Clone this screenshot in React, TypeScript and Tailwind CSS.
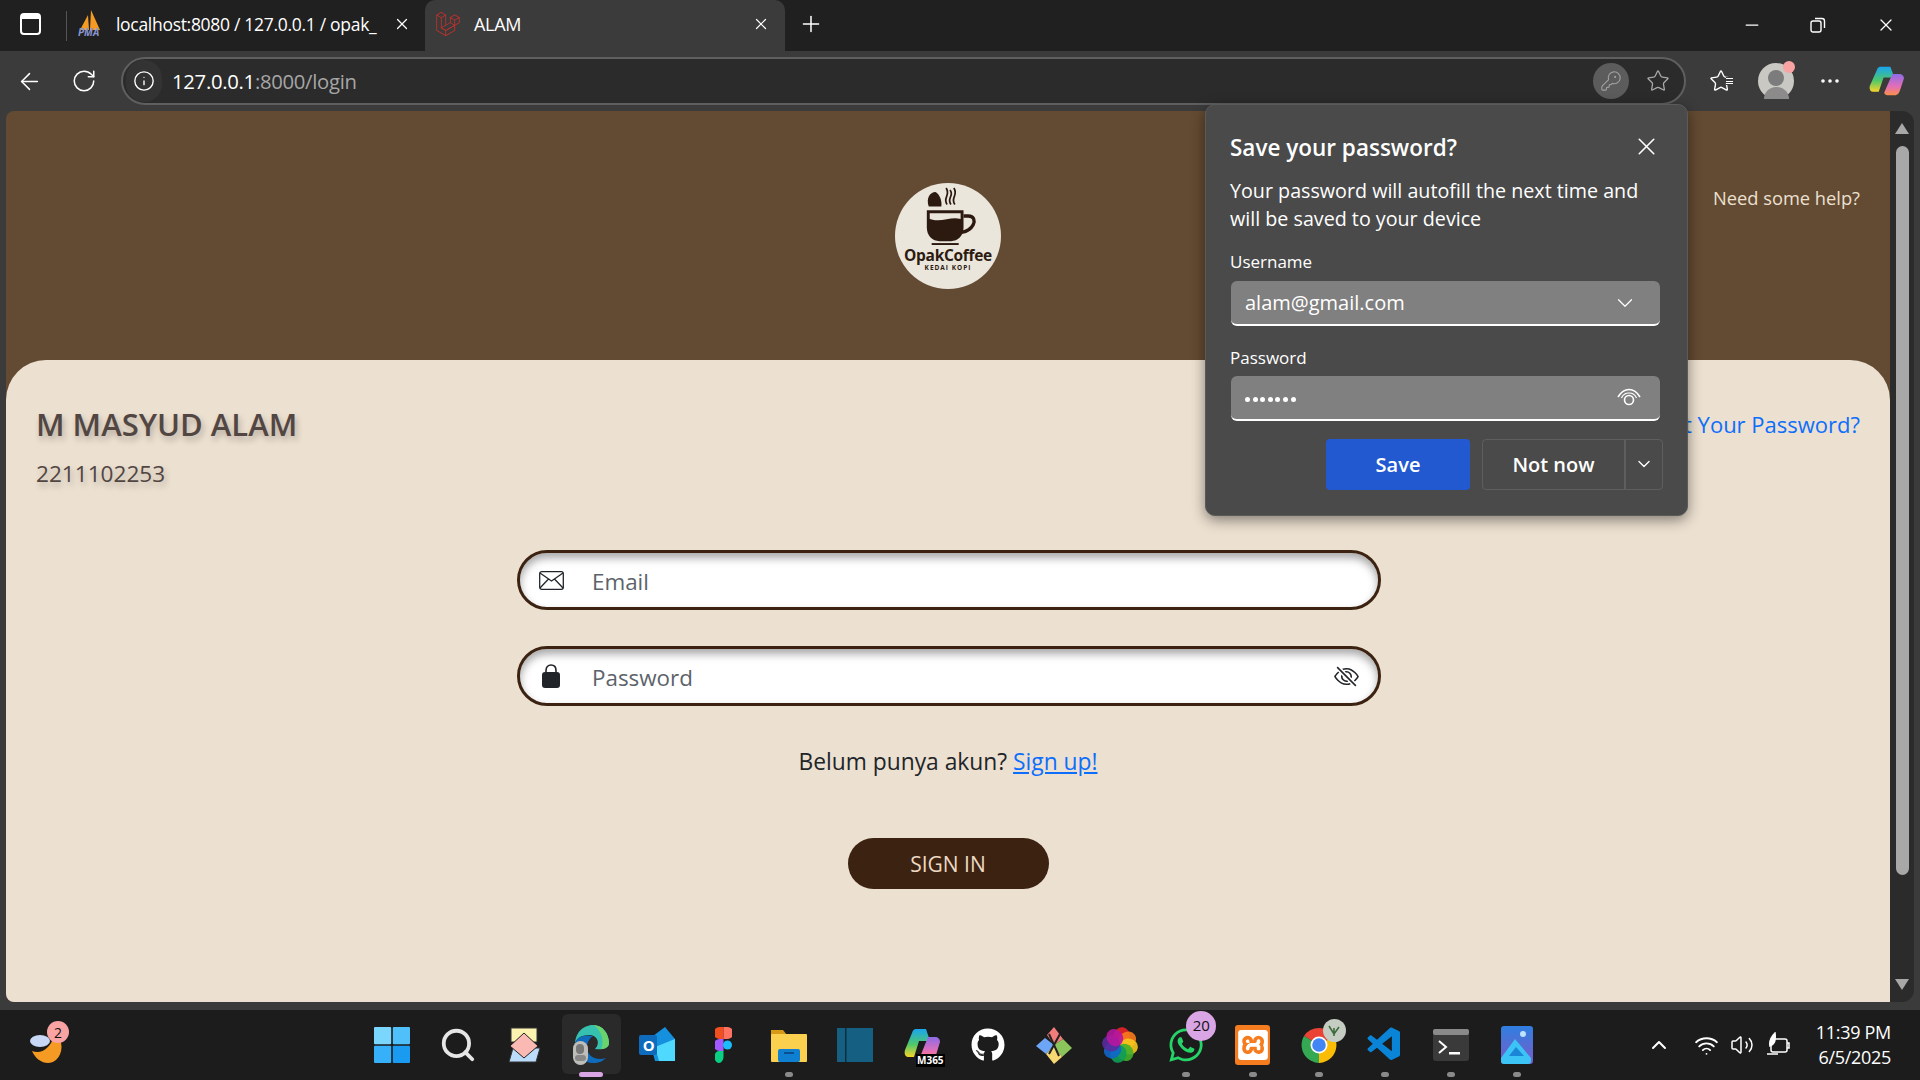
import React from "react"
import {
  ArrowLeft,
  ChevronDown,
  ChevronUp,
  Ellipsis,
  Info,
  KeyRound,
  Minus,
  Plus,
  RotateCw,
  Search,
  Star,
  Volume2,
  Wifi,
  X,
} from "lucide-react"
import { BsEyeSlash } from "react-icons/bs"
import { FaGithub, FaWhatsapp } from "react-icons/fa"
import { SiLaravel, SiXampp } from "react-icons/si"
import { VscVscode } from "react-icons/vsc"

const ui = "font-['Open_Sans','Noto_Sans',sans-serif]"

function WindowsLogo() {
  return (
    <svg width="36" height="36" viewBox="0 0 36 36">
      <rect x="0" y="0" width="17.2" height="17.2" rx="1" fill="#7ad6fc" />
      <rect x="18.8" y="0" width="17.2" height="17.2" rx="1" fill="#50c0fa" />
      <rect x="0" y="18.8" width="17.2" height="17.2" rx="1" fill="#36b0f8" />
      <rect x="18.8" y="18.8" width="17.2" height="17.2" rx="1" fill="#1a9bf2" />
    </svg>
  )
}

function WidgetsIcon() {
  return (
    <svg width="36" height="36" viewBox="0 0 36 36">
      <rect x="5" y="1" width="26" height="14" fill="#fdf3b0" stroke="#333" />
      <path d="M3 35 L7 21 H34 L30 35 Z" fill="#bcdcfb" stroke="#333" />
      <path d="M18 6 L32 19 L18 31 L4 19 Z" fill="#fbb9b3" stroke="#222" />
    </svg>
  )
}

function EdgeIcon() {
  return (
    <div className="relative w-9 h-10">
      <svg width="36" height="38" viewBox="0 0 36 38">
        <path d="M2 20 C2 6 12 0 20 0 C30 0 36 9 36 18 C36 24 28 25 22 24 C28 18 24 10 16 10 C8 10 2 14 2 20 Z" fill="#36c0b0" />
        <path d="M20 0 C30 0 36 9 36 18 C36 22 32 24 28 24 C32 16 28 4 20 0 Z" fill="#6ad36b" />
        <path d="M2 20 C2 30 10 38 20 38 C26 38 30 36 33 33 C24 36 14 32 14 22 C14 17 17 13 20 11 C10 9 2 13 2 20 Z" fill="#0f6cbd" />
      </svg>
      <div className="absolute left-0 bottom-0 w-[15px] h-[24px] rounded-full bg-[#bdbdb9] flex flex-col items-center justify-center gap-px">
        <div className="w-[8px] h-[10px] rounded-full bg-[#777]" />
        <div className="w-[11px] h-[6px] rounded-full bg-[#888]" />
      </div>
    </div>
  )
}

function OutlookIcon() {
  return (
    <div className="relative w-9 h-9">
      <svg width="36" height="36" viewBox="0 0 36 36">
        <path d="M10 12 L26 0 L36 12 V34 H16 Z" fill="#1490df" />
        <path d="M16 20 L36 12 V34 H20 Z" fill="#50d9ff" />
        <rect x="0" y="8" width="18" height="20" rx="2" fill="#0f6cbd" />
      </svg>
      <span className={`absolute left-[4px] top-[9px] text-white text-[15px] font-bold leading-[18px] ${ui}`}>O</span>
    </div>
  )
}

function FigmaIcon() {
  return (
    <svg width="17" height="36" viewBox="0 0 17 36">
      <path d="M8.5 0 H4.5 A4.5 4.5 0 0 0 4.5 12 H8.5 Z" fill="#f24e1e" />
      <path d="M8.5 0 H12.5 A4.5 4.5 0 0 1 12.5 12 H8.5 Z" fill="#ff7262" />
      <path d="M8.5 12 H4.5 A4.5 4.5 0 0 0 4.5 24 H8.5 Z" fill="#a259ff" />
      <circle cx="12.5" cy="18" r="4.5" fill="#1abcfe" />
      <path d="M8.5 24 H4.5 A4.5 6 0 1 0 8.5 30 Z" fill="#0acf83" />
    </svg>
  )
}

function FolderIcon() {
  return (
    <svg width="36" height="36" viewBox="0 0 36 36">
      <path d="M0 3 H12 L16 8 H0 Z" fill="#d69a17" />
      <rect x="0" y="7" width="36" height="28" rx="1" fill="#fcd04f" />
      <rect x="7" y="22" width="22" height="13" rx="2" fill="#0f7fd1" />
      <rect x="13" y="25" width="10" height="2" fill="#0a4f8f" />
    </svg>
  )
}

function BookIcon() {
  return (
    <svg width="36" height="36" viewBox="0 0 36 36">
      <rect x="0" y="1" width="36" height="34" fill="#156082" />
      <rect x="8" y="1" width="1.5" height="34" fill="#0b2f40" />
    </svg>
  )
}

function CopilotIcon({ id, width = 36, height = 36 }: { id: string; width?: number; height?: number }) {
  return (
    <svg width={width} height={height} viewBox="0 0 36 36" preserveAspectRatio="none">
      <defs>
        <linearGradient id={`${id}a`} x1="0" y1="0" x2="0" y2="1">
          <stop offset="0" stopColor="#1aa5f0" />
          <stop offset="0.55" stopColor="#4fc86a" />
          <stop offset="1" stopColor="#f7d528" />
        </linearGradient>
        <linearGradient id={`${id}b`} x1="0" y1="0" x2="0" y2="1">
          <stop offset="0" stopColor="#8d6be8" />
          <stop offset="0.6" stopColor="#e46fb5" />
          <stop offset="1" stopColor="#fb8e4a" />
        </linearGradient>
      </defs>
      <path d="M12 2 H22 L26 14 H15 L10 30 H4 C1 30 0 26 1 23 L8 6 C9 3 10 2 12 2 Z" fill={`url(#${id}a)`} />
      <path d="M20 34 H26 C30 34 31 31 32 28 L36 15 C36 12 34 10 31 10 H24 L16 30 C15 32 17 34 20 34 Z" fill={`url(#${id}b)`} />
    </svg>
  )
}

function GitIcon() {
  return (
    <svg width="36" height="38" viewBox="0 0 36 38">
      <path d="M18 1 L27 13 L18 19 L11 9 Z" fill="#f27c7c" />
      <path d="M27 13 L36 22 L26 31 L18 19 Z" fill="#8cc55b" />
      <path d="M18 19 L26 31 L18 38 L10 28 Z" fill="#f7d873" />
      <path d="M9 12 L18 19 L10 28 L0 20 Z" fill="#6ea6f7" />
      <path d="M13 8 L23 30 M24 8 L13 28" stroke="#222" strokeWidth="2" />
    </svg>
  )
}

function PhotosIcon() {
  const petals = ["#e8232a", "#f97a1c", "#f7c81e", "#43b02a", "#0f9d58", "#1166cc", "#5b2aa0", "#b5179e"]
  return (
    <svg width="36" height="36" viewBox="0 0 36 36">
      {petals.map((c, i) => (
        <ellipse
          key={c}
          cx="18"
          cy="9"
          rx="8"
          ry="9"
          fill={c}
          opacity="0.9"
          transform={`rotate(${i * 45 + 10} 18 18)`}
        />
      ))}
    </svg>
  )
}

function ChromeIcon() {
  return (
    <svg width="36" height="36" viewBox="0 0 36 36">
      <path d="M18 18 L3 9 A18 18 0 0 1 33 9 Z" fill="#ea4335" />
      <path d="M18 18 L33 9 A18 18 0 0 1 18 36 Z" fill="#fbbc05" />
      <path d="M18 18 L18 36 A18 18 0 0 1 3 9 Z" fill="#34a853" />
      <circle cx="18" cy="18" r="8.5" fill="#fff" />
      <circle cx="18" cy="18" r="6.8" fill="#4285f4" />
    </svg>
  )
}

function TerminalIcon() {
  return (
    <svg width="36" height="32" viewBox="0 0 36 32">
      <rect x="0" y="0" width="36" height="32" rx="3" fill="#3a3a3a" />
      <rect x="0" y="0" width="36" height="6" rx="2" fill="#8a8a8a" />
      <path d="M6 12 L13 18 L6 24" stroke="#fff" strokeWidth="2" fill="none" />
      <rect x="16" y="23" width="11" height="2.5" fill="#fff" />
    </svg>
  )
}

function PhotoEditIcon() {
  return (
    <svg width="32" height="38" viewBox="0 0 32 38">
      <defs>
        <linearGradient id="ph" x1="0" y1="0" x2="0" y2="1">
          <stop offset="0" stopColor="#2f7fe0" />
          <stop offset="1" stopColor="#7a5cc9" />
        </linearGradient>
      </defs>
      <rect x="0" y="0" width="32" height="38" rx="3" fill="url(#ph)" />
      <circle cx="22" cy="8" r="3" fill="#bfe3ff" />
      <path d="M0 32 L14 13 L30 32 V35 C30 37 29 38 27 38 H3 C1 38 0 37 0 35 Z" fill="#3bc4f5" />
      <path d="M8 30 L15 21 L23 30 Z" fill="#1b86d8" />
    </svg>
  )
}

function Dot({ active }: { active?: boolean }) {
  if (active) return <div className="absolute bottom-[3px] w-[24px] h-[5px] rounded-full bg-[#d9a5e4]" />
  return <div className="absolute bottom-[3px] w-[8px] h-[5px] rounded-full bg-[#8a8a8a]" />
}

function TaskItem({
  children,
  dot,
  active,
}: {
  children: React.ReactNode
  dot?: boolean
  active?: boolean
}) {
  return (
    <div className="relative w-[66.2px] h-[70px] flex items-center justify-center pb-px">
      {active && (
        <div className="absolute left-[4px] top-[4px] w-[59px] h-[60px] rounded-md bg-[#2a2a2a]" />
      )}
      <div className="relative">{children}</div>
      {(dot || active) && <Dot active={active} />}
    </div>
  )
}

function Logo() {
  return (
    <div className="w-[106px] h-[106px] rounded-full bg-[#ebe6dc] flex flex-col items-center">
      <svg width="56" height="62" viewBox="0 0 58 62" className="mt-[3px] ml-[3px]">
        <path d="M7 20 C4 12 8 5 14 5 C18 7 21 14 20 20 Z" fill="#2c1a10" />
        <path d="M26 18 C21 11 30 9 25 1 M34 18 C29 11 38 9 33 1 M30 18 C25 11 34 9 29 3" stroke="#2c1a10" strokeWidth="1.8" fill="none" />
        <path d="M5 24 H43 V42 C43 51 37 56 30 56 H18 C11 56 5 51 5 42 Z" fill="#2c1a10" />
        <path d="M8 27 H40 V33 C30 30 20 37 8 33 Z" fill="#ebe6dc" />
        <path d="M43 30 H48 C54 30 55 35 53 39 C51 43 46 46 41 47" stroke="#2c1a10" strokeWidth="3.5" fill="none" />
        <rect x="10" y="58" width="28" height="2" fill="#2c1a10" />
      </svg>
      <span className={`text-[#2c1a10] text-[15.5px] font-bold leading-[16px] -mt-[1px] tracking-[-0.3px] ${ui}`}>
        OpakCoffee
      </span>
      <span className={`text-[#2c1a10] text-[6.5px] font-bold leading-[9px] tracking-[1px] ${ui}`}>
        KEDAI KOPI
      </span>
    </div>
  )
}

function EnvelopeIcon() {
  return (
    <svg width="25" height="19" viewBox="0 0 25 19" fill="none" stroke="#212529" strokeWidth="1.3">
      <rect x="0.7" y="0.7" width="23.6" height="17.6" rx="2" />
      <path d="M1 2 L12.5 10 L24 2 M1 17 L9.5 8 M24 17 L15.5 8" />
    </svg>
  )
}

function LockIcon() {
  return (
    <svg width="18" height="24" viewBox="0 0 18 24">
      <path d="M4 10 V6.5 C4 3.2 6 1 9 1 C12 1 14 3.2 14 6.5 V10" fill="none" stroke="#212529" strokeWidth="1.6" />
      <rect x="0" y="8" width="18" height="16" rx="3" fill="#212529" />
    </svg>
  )
}

function RevealIcon() {
  return (
    <svg width="24" height="19" viewBox="0 0 24 19" fill="none" stroke="white" strokeWidth="1.6">
      <path d="M1 9 C4 4 8 1.5 12 1.5 C16 1.5 20 4 23 9" />
      <path d="M4.5 10 C6 6.5 9 5 12 5 C15 5 18 6.5 19.5 10" strokeWidth="1.2" />
      <circle cx="12" cy="12" r="4.5" />
    </svg>
  )
}

function SavePasswordPopup() {
  return (
    <div
      className={`absolute left-[1205px] top-[104px] w-[483px] h-[412px] rounded-[10px] bg-[#4a4a4a] border border-[#5a5a5a] shadow-[0_4px_14px_rgba(0,0,0,0.45)] px-[24px] pt-[27px] text-white ${ui}`}
    >
      <div className="flex items-center justify-between h-[32px] pr-[2px]">
        <span className="text-[22.5px] font-semibold">Save your password?</span>
        <X size={29} strokeWidth={1.3} className="-mt-[4px]" />
      </div>
      <div className="mt-[13px] text-[19.7px] leading-[28px]">
        Your password will autofill the next time and
        <br />
        will be saved to your device
      </div>
      <div className="mt-[17px] text-[17px] leading-[24px]">Username</div>
      <div className="mt-[7px] h-[45px] w-[429px] ml-px rounded-md bg-[#808080] border-b-2 border-white flex items-center justify-between pl-[14px] pr-[22px]">
        <span className="text-[20px]">alam@gmail.com</span>
        <ChevronDown size={26} strokeWidth={1.1} />
      </div>
      <div className="mt-[20px] text-[17px] leading-[24px]">Password</div>
      <div className="mt-[6px] h-[45px] w-[429px] ml-px rounded-md bg-[#808080] border-b-2 border-white flex items-center justify-between pl-[14px] pr-[19px]">
        <div className="flex gap-[2.6px] mt-[3px]">
          {[0, 1, 2, 3, 4, 5, 6].map((i) => (
            <div key={i} className="w-[5px] h-[5px] rounded-full bg-white" />
          ))}
        </div>
        <RevealIcon />
      </div>
      <div className="mt-[18px] flex justify-end gap-[12px]">
        <button className="w-[144px] h-[51px] rounded-[4px] bg-[#2359d0] text-[20px] font-semibold">
          Save
        </button>
        <div className="w-[181px] h-[51px] rounded-[4px] border border-[#5e5e5e] flex">
          <div className="w-[143px] border-r-2 border-[#5e5e5e] flex items-center justify-center text-[20px] font-semibold">
            Not now
          </div>
          <div className="flex-1 flex items-center justify-center">
            <ChevronDown size={20} strokeWidth={1.6} className="-mt-[2px]" />
          </div>
        </div>
      </div>
    </div>
  )
}

function LoginInput({
  icon,
  placeholder,
  trailing,
}: {
  icon: React.ReactNode
  placeholder: string
  trailing?: React.ReactNode
}) {
  return (
    <div className="w-[864px] h-[60px] rounded-full border-[3.5px] border-[#3c2210] bg-white shadow-[inset_0_5px_8px_rgba(0,0,0,0.35)] flex items-center pl-[16px] pr-[19px]">
      <div className="w-[30px] flex justify-center">{icon}</div>
      <span className="ml-[26px] pt-[3px] flex-1 text-[22.4px] text-[#5c636a]">{placeholder}</span>
      {trailing}
    </div>
  )
}

export default function App() {
  return (
    <div className={`relative w-[1920px] h-[1080px] overflow-hidden flex flex-col bg-[#3b3b3b] ${ui}`}>
      {/* title bar */}
      <div className="h-[51px] bg-[#202020] flex items-center text-white shrink-0">
        <div className="w-[66px] flex justify-center pr-[5px] pb-[3px]">
          <div className="w-[21px] h-[22px] rounded-[4px] border-2 border-white relative">
            <div className="h-[4px] bg-white" />
          </div>
        </div>
        <div className="w-px h-[30px] bg-[#555]" />
        <div className="w-[358px] flex items-center pl-[11px] pb-[3px]">
          <div className="relative w-[24px] h-[28px] shrink-0">
            <svg width="24" height="20" viewBox="0 0 24 20">
              <path d="M2 20 L10 5 L11 20 Z" fill="#f59a23" />
              <path d="M12 20 L13 0 L22 20 Z" fill="#f59a23" />
            </svg>
            <span className="absolute left-0 bottom-0 text-[10px] leading-[11px] font-bold italic text-[#8b96d0]">PMA</span>
          </div>
          <span className="ml-[14px] w-[267px] overflow-hidden whitespace-nowrap text-[17.5px] tracking-[-0.3px]">
            localhost:8080 / 127.0.0.1 / opak_
          </span>
          <X size={18} strokeWidth={1.6} className="ml-[10px] shrink-0" />
        </div>
        <div className="w-[360px] h-[51px] rounded-t-[10px] bg-[#3b3b3b] flex items-center pl-[11px] pr-[15px] pb-[3px]">
          <SiLaravel size={24} color="#d0302b" />
          <span className="ml-[14px] flex-1 text-[18px] tracking-[-0.3px]">ALAM</span>
          <X size={18} strokeWidth={1.6} />
        </div>
        <Plus size={26} strokeWidth={1.4} className="ml-[13px] mb-[3px]" />
        <div className="flex-1" />
        <div className="flex items-center gap-[50px] pr-[24px] pb-[2px]">
          <Minus size={20} strokeWidth={1.5} className="-mr-[2px]" />
          <svg width="16" height="16" viewBox="0 0 16 16" fill="none" stroke="white" strokeWidth="1.4">
            <rect x="1" y="4" width="10" height="11" rx="2" />
            <path d="M5 1.5 H12 C13.5 1.5 14.5 2.5 14.5 4 V11" />
          </svg>
          <X size={20} strokeWidth={1.5} />
        </div>
      </div>

      {/* toolbar */}
      <div className="h-[60px] flex items-center shrink-0 text-white">
        <div className="w-[121px] flex items-center pl-[16px] gap-[28px]">
          <ArrowLeft size={27} strokeWidth={1.3} />
          <RotateCw size={26} strokeWidth={1.4} />
        </div>
        <div className="w-[1565px] h-[48px] rounded-full border-2 border-[#5f5f5f] bg-[#2b2b2b] flex items-center pl-[3px] pr-[14px]">
          <div className="w-[36px] h-[42px] rounded-full bg-[#333] flex items-center justify-center">
            <Info size={22} strokeWidth={1.5} />
          </div>
          <span className="ml-[10px] text-[20.3px] tracking-[-0.3px]">
            127.0.0.1<span className="text-[#a6a6a6]">:8000/login</span>
          </span>
          <div className="flex-1" />
          <div className="w-[36px] h-[36px] rounded-full bg-[#5c5c5c] flex items-center justify-center">
            <KeyRound size={22} strokeWidth={1.2} color="#a0a0a0" />
          </div>
          <Star size={24} strokeWidth={1.3} color="#a8a8a8" className="ml-[17px]" />
        </div>
        <div className="flex-1 flex items-center pl-[23px]">
          <div className="relative">
            <Star size={24} strokeWidth={1.4} />
            <div className="absolute right-0 top-[8px] w-[7px] h-[8px] bg-[#3b3b3b] flex flex-col justify-between py-px">
              <div className="h-px bg-white" />
              <div className="h-px bg-white" />
              <div className="h-px bg-white" />
            </div>
          </div>
          <div className="relative ml-[25px] w-[36px] h-[36px] rounded-full bg-[#c9c8c3] flex flex-col items-center justify-end overflow-visible">
            <div className="w-[16px] h-[16px] rounded-full bg-[#7c7c7c] mb-[1px]" />
            <div className="w-[25px] h-[12px] rounded-t-full bg-[#8b8b8b]" />
            <div className="absolute -right-[1px] -top-[2px] w-[12px] h-[12px] rounded-full bg-[#f9a3a3]" />
          </div>
          <Ellipsis size={24} strokeWidth={1.6} className="ml-[24px]" />
          <div className="ml-[27px]">
            <CopilotIcon id="cpt" width={35} height={32} />
          </div>
        </div>
      </div>

      {/* viewport */}
      <div className="h-[891px] flex pl-[6px] pr-[6px] shrink-0">
        <div className="w-[1885px] bg-[#634a32] rounded-l-[8px] overflow-hidden flex flex-col">
          <div className="h-[249px] relative flex justify-center pt-[72px]">
            <Logo />
            <span className="absolute right-[30px] top-[74px] text-[18.3px] leading-[26px] text-[#ece0d0]">
              Need some help?
            </span>
          </div>
          <div className="flex-1 bg-[#ece0d0] rounded-t-[40px] px-[30px] flex flex-col items-center relative">
            <div className="w-full flex justify-between pt-[44px]">
              <div>
                <div className="text-[31px] leading-[40px] font-semibold text-[#524643] [text-shadow:2px_4px_6px_rgba(0,0,0,0.25)]">
                  M MASYUD ALAM
                </div>
                <div className="mt-[14px] mb-[-1px] text-[22.6px] leading-[32px] text-[#524643] [text-shadow:2px_4px_6px_rgba(0,0,0,0.25)]">
                  2211102253
                </div>
              </div>
              <span className="text-[22px] leading-[40px] text-[#0d6efd]">Forgot Your Password?</span>
            </div>
            <div className="mt-[61px] ml-[2px] flex flex-col gap-[36px]">
              <LoginInput icon={<EnvelopeIcon />} placeholder="Email" />
              <LoginInput
                icon={<LockIcon />}
                placeholder="Password"
                trailing={<BsEyeSlash size={25} color="#212529" />}
              />
            </div>
            <div className="mt-[40px] text-[22.8px] leading-[32px] text-[#212529]">
              Belum punya akun? <span className="text-[#0d6efd] underline">Sign up!</span>
            </div>
            <button className="mt-[60px] w-[201px] h-[51px] rounded-full bg-[#3c2210] pt-[2px] text-[21px] text-[#ecd9c3]">
              SIGN IN
            </button>
          </div>
        </div>
        <div className="flex-1 h-full bg-[#2b2b2b] rounded-r-[12px] flex flex-col items-center justify-between pt-[12px] pb-[12px] px-[5px]">
          <div className="w-0 h-0 border-x-[7px] border-x-transparent border-b-[11px] border-b-[#a8a8a8]" />
          <div className="w-[13px] h-[729px] mb-[92px] rounded-full bg-[#a8a8a8]" />
          <div className="w-0 h-0 border-x-[7px] border-x-transparent border-t-[11px] border-t-[#a8a8a8]" />
        </div>
      </div>

      <div className="h-[8px] shrink-0" />

      {/* taskbar */}
      <div className="h-[70px] bg-[#1c1c1c] flex items-center text-white shrink-0">
        <div className="w-[359px] pl-[28px] flex items-center">
          <div className="relative w-[40px] h-[40px]">
            <svg width="38" height="40" viewBox="0 0 38 40">
              <path d="M4 26 C14 30 24 22 27 8 C35 14 36 28 28 35 C20 42 8 36 4 26 Z" fill="#f59a23" />
              <ellipse cx="12" cy="16" rx="10" ry="6" fill="#c9d8f7" />
            </svg>
            <div className="absolute left-[19px] -top-[4px] w-[22px] h-[22px] rounded-full bg-[#f9a3a3] text-[#111] text-[14px] flex items-center justify-center">
              2
            </div>
          </div>
        </div>
        <div className="flex">
          <TaskItem><WindowsLogo /></TaskItem>
          <TaskItem><Search size={38} strokeWidth={2.4} color="#e6e6e6" /></TaskItem>
          <TaskItem><WidgetsIcon /></TaskItem>
          <TaskItem active><EdgeIcon /></TaskItem>
          <TaskItem><OutlookIcon /></TaskItem>
          <TaskItem><FigmaIcon /></TaskItem>
          <TaskItem dot><FolderIcon /></TaskItem>
          <TaskItem><BookIcon /></TaskItem>
          <TaskItem>
            <div className="relative">
              <CopilotIcon id="cpm" />
              <span className="absolute -right-[5px] -bottom-[4px] bg-black text-white text-[10px] font-bold leading-[13px] px-px">M365</span>
            </div>
          </TaskItem>
          <TaskItem><FaGithub size={34} color="#fff" /></TaskItem>
          <TaskItem><GitIcon /></TaskItem>
          <TaskItem><PhotosIcon /></TaskItem>
          <TaskItem dot>
            <div className="relative">
              <FaWhatsapp size={38} color="#25d366" />
              <div className="absolute -right-[11px] -top-[15px] w-[30px] h-[30px] rounded-full bg-[#d9a5e4] text-[#111] text-[15px] flex items-center justify-center">
                20
              </div>
            </div>
          </TaskItem>
          <TaskItem dot>
            <div className="w-[35px] h-[40px] rounded-[3px] bg-[#f57c1f] flex items-center justify-center">
              <SiXampp size={30} color="#fff" />
            </div>
          </TaskItem>
          <TaskItem dot>
            <div className="relative">
              <ChromeIcon />
              <div className="absolute -right-[9px] -top-[8px] w-[23px] h-[23px] rounded-full bg-[#c5cdc3] flex items-center justify-center">
                <svg width="14" height="14" viewBox="0 0 14 14" fill="none" stroke="#3f6b3f" strokeWidth="1.6">
                  <path d="M7 13 V5 M7 11 L2 3 M7 11 L12 4" />
                </svg>
              </div>
            </div>
          </TaskItem>
          <TaskItem dot><VscVscode size={40} color="#0a84d6" /></TaskItem>
          <TaskItem dot><TerminalIcon /></TaskItem>
          <TaskItem dot><PhotoEditIcon /></TaskItem>
        </div>
        <div className="flex-1 flex items-center pl-[97px]">
          <ChevronUp size={24} strokeWidth={2} />
          <Wifi size={25} strokeWidth={1.8} className="ml-[23px]" />
          <Volume2 size={24} strokeWidth={1.5} className="ml-[11px]" />
          <svg width="24" height="26" viewBox="0 0 24 26" fill="none" stroke="white" strokeWidth="1.5" className="ml-[12px]">
            <rect x="5" y="7" width="16" height="13" rx="2" />
            <path d="M21 11 H23 V16 H21" />
            <path d="M9 1 C5 5 3 9 4 14 C8 13 10 9 9 1 Z" fill="white" />
            <path d="M1 22 H12" />
          </svg>
          <div className="ml-auto pr-[29px] text-right text-[18px] leading-[25px] tracking-[-0.3px]">
            <div>11:39 PM</div>
            <div>6/5/2025</div>
          </div>
        </div>
      </div>

      <SavePasswordPopup />
    </div>
  )
}
